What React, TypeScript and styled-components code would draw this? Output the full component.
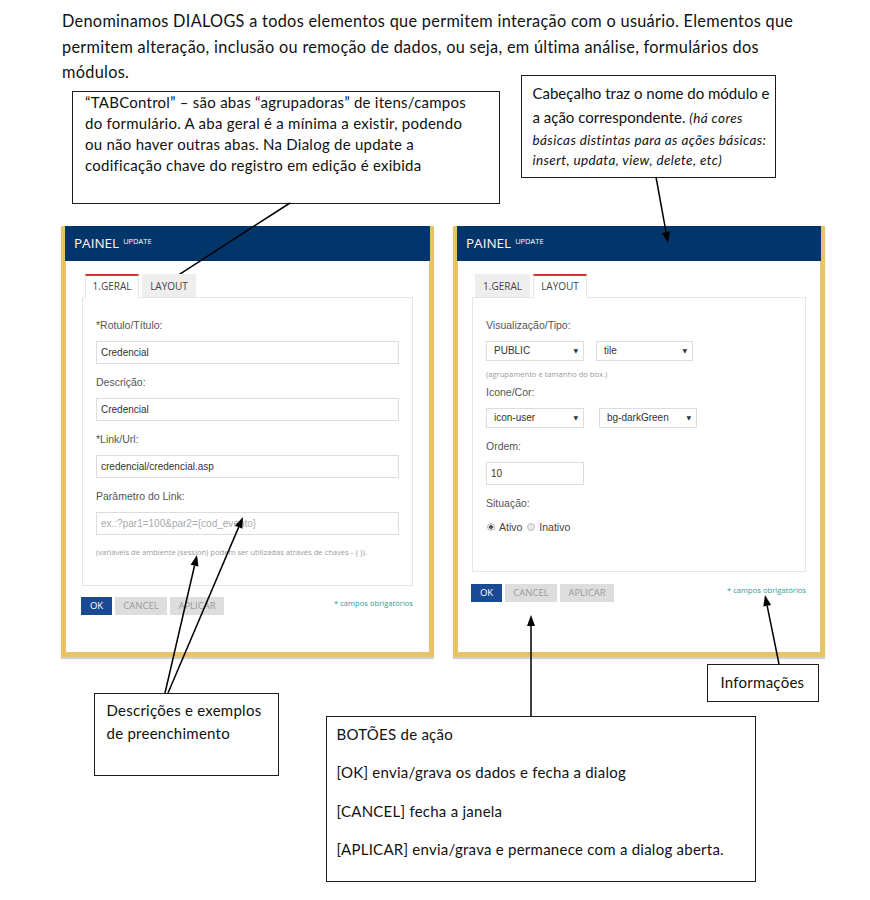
import React from "react";
import styled, {createGlobalStyle} from "styled-components";

const DOC_FONT = `"Lato", "Liberation Sans", sans-serif`;
const UI_FONT = `"Open Sans", "Liberation Sans", sans-serif`;
const FORM_FONT = `"Liberation Sans", Arial, sans-serif`;

const GlobalStyle = createGlobalStyle`
  body {
    margin: 0;
    background: #ffffff;
  }
  * {
    box-sizing: border-box;
  }
`;

const Page = styled.div`
  position: relative;
  width: 870px;
  height: 900px;
  overflow: hidden;
  background: #ffffff;
  font-family: ${DOC_FONT};
  color: #111111;
`;

const Intro = styled.p`
  margin: 0;
  padding: 8px 0 0 62px;
  font-size: 16.3px;
  letter-spacing: 0.3px;
  line-height: 25.5px;
`;

const CalloutRow = styled.div`
  display: flex;
  align-items: flex-start;
  margin-top: -10px;
`;

const Callout = styled.div<{$w: number; $h: number; $ml?: number; $mt?: number; $pad: string; $tight?: boolean}>`
  width: ${p => p.$w}px;
  height: ${p => p.$h}px;
  margin-left: ${p => p.$ml ?? 0}px;
  margin-top: ${p => p.$mt ?? 0}px;
  padding: ${p => p.$pad};
  border: 1.5px solid #1c1c1c;
  background: #ffffff;
  font-size: 15px;
  letter-spacing: ${p => (p.$tight ? "0" : "0.25px")};
  white-space: nowrap;
  flex-shrink: 0;
`;

const CalloutText = styled.div<{$lh: number}>`
  line-height: ${p => p.$lh}px;
`;

const Note = styled.i`
  font-size: 13.5px;
  letter-spacing: 0.4px;
`;

const NoteBlock = styled.div`
  font-style: italic;
  font-size: 13.5px;
  letter-spacing: 0.4px;
  line-height: 20px;
`;

const CalloutPara = styled.p`
  margin: 0 0 17.5px 0;
  line-height: 21px;
`;

const PanelRow = styled.div`
  display: flex;
  gap: 19px;
  margin-top: 22px;
  padding-left: 61px;
`;

const Panel = styled.div<{$w: number}>`
  width: ${p => p.$w}px;
  display: flex;
  flex-direction: column;
  background: #ffffff;
  border: 5px solid #e7c36b;
  border-top: none;
  box-shadow: 0 2px 1px rgba(0, 0, 0, 0.18);
`;

const PanelHeader = styled.div`
  height: 35px;
  margin: 0 -1px;
  padding-left: 9px;
  display: flex;
  align-items: center;
  background: #02366b;
  color: #ffffff;
  font-family: ${UI_FONT};
  font-size: 13.5px;
`;

const Sup = styled.span`
  font-size: 7.5px;
  margin-left: 4px;
  align-self: flex-start;
  margin-top: 10px;
`;

const PanelBody = styled.div<{$inset: number; $pb: number}>`
  flex: 1;
  display: flex;
  flex-direction: column;
  padding: 13px ${p => p.$inset}px ${p => p.$pb}px ${p => p.$inset}px;
`;

const Tabs = styled.div`
  display: flex;
  gap: 3px;
  padding-left: 3px;
  position: relative;
  z-index: 1;
  margin-bottom: -1px;
`;

const Tab = styled.div<{$active?: boolean; $w: number}>`
  width: ${p => p.$w}px;
  height: 24px;
  display: flex;
  align-items: center;
  justify-content: center;
  font-family: ${UI_FONT};
  font-size: 10px;
  color: #444444;
  background: ${p => (p.$active ? "#ffffff" : "#eeeeee")};
  border-top: 2px solid ${p => (p.$active ? "#cc3a32" : "#eeeeee")};
  border-left: 1px solid ${p => (p.$active ? "#e6e6e6" : "#eeeeee")};
  border-right: 1px solid ${p => (p.$active ? "#e6e6e6" : "#eeeeee")};
  border-bottom: 1px solid ${p => (p.$active ? "#ffffff" : "#e6e6e6")};
`;

const TabPane = styled.div<{$pb: number}>`
  border: 1px solid #e6e6e6;
  padding: 19px 13px ${p => p.$pb}px 13px;
  font-family: ${FORM_FONT};
`;

const Label = styled.div<{$mt?: number}>`
  margin-top: ${p => p.$mt ?? 0}px;
  margin-bottom: 8px;
  font-size: 10.5px;
  line-height: 16px;
  color: #555555;
`;

const Input = styled.div<{$w?: number; $placeholder?: boolean}>`
  width: ${p => (p.$w ? `${p.$w}px` : "100%")};
  height: 23px;
  display: flex;
  align-items: center;
  padding-left: 4px;
  border: 1px solid #dddddd;
  font-size: 10px;
  color: ${p => (p.$placeholder ? "#aaaaaa" : "#333333")};
`;

const SelectRow = styled.div<{$gap: number}>`
  display: flex;
  gap: ${p => p.$gap}px;
`;

const Select = styled.div<{$w: number}>`
  width: ${p => p.$w}px;
  height: 20px;
  display: flex;
  align-items: center;
  justify-content: space-between;
  padding: 0 5px 0 7px;
  border: 1px solid #dddddd;
  font-size: 10px;
  color: #333333;
`;

const Caret = styled.span`
  font-family: "DejaVu Sans", sans-serif;
  font-size: 6px;
  color: #333333;
`;

const Hint = styled.div<{$mt: number}>`
  margin-top: ${p => p.$mt}px;
  font-family: ${UI_FONT};
  font-size: 7.6px;
  line-height: 12px;
  color: #9a9a9a;
`;

const RadioRow = styled.div`
  display: flex;
  align-items: center;
  height: 16px;
  font-size: 10.5px;
  color: #444444;
`;

const Radio = styled.span<{$checked?: boolean}>`
  width: 8px;
  height: 8px;
  margin: 0 4px 0 1px;
  border-radius: 50%;
  border: 1px solid #bbbbbb;
  background: ${p => (p.$checked ? "radial-gradient(circle, #555555 0 1.6px, #e4e4e4 2px)" : "#e9e9e9")};
`;

const RadioLabel = styled.span`
  margin-right: 4px;
`;

const Footer = styled.div<{$mt: number}>`
  display: flex;
  justify-content: space-between;
  align-items: flex-start;
  margin: ${p => p.$mt}px 0 0 -1px;
`;

const Buttons = styled.div`
  display: flex;
  gap: 3px;
`;

const Button = styled.div<{$primary?: boolean; $w: number}>`
  width: ${p => p.$w}px;
  height: 18px;
  display: flex;
  align-items: center;
  justify-content: center;
  font-family: ${UI_FONT};
  font-size: 9.5px;
  color: ${p => (p.$primary ? "#ffffff" : "#9a9a9a")};
  background: ${p => (p.$primary ? "#1b4a95" : "#dddddd")};
`;

const Required = styled.div`
  font-family: ${UI_FONT};
  font-size: 7.6px;
  line-height: 12px;
  color: #2f9d92;
`;

const BottomRow = styled.div`
  display: flex;
  align-items: flex-start;
  margin-top: 7px;
`;

const RightColumn = styled.div`
  width: 493px;
  margin-left: 47px;
  display: flex;
  flex-direction: column;
`;

const InfoCallout = styled(Callout)`
  align-self: flex-end;
`;

const Overlay = styled.svg`
  position: absolute;
  left: 0;
  top: 0;
  width: 870px;
  height: 900px;
  pointer-events: none;
`;

type ArrowProps = { x1: number; y1: number; x2: number; y2: number };

const Arrow: React.FC<ArrowProps> = ({x1, y1, x2, y2}) => {
    const len = Math.hypot(x2 - x1, y2 - y1);
    const ux = (x2 - x1) / len;
    const uy = (y2 - y1) / len;
    const headLen = 11;
    const half = 4;
    const bx = x2 - ux * headLen;
    const by = y2 - uy * headLen;
    const pts = [
        `${x2},${y2}`,
        `${bx - uy * half},${by + ux * half}`,
        `${bx + uy * half},${by - ux * half}`,
    ].join(" ");
    return <g>
        <line x1={x1} y1={y1} x2={bx} y2={by} stroke="#000" strokeWidth={1.5}/>
        <polygon points={pts} fill="#000"/>
    </g>;
};

const PanelHead: React.FC = () => <PanelHeader>
    PAINEL<Sup>UPDATE</Sup>
</PanelHeader>;

const FormFooter: React.FC<{ mt: number }> = ({mt}) => <Footer $mt={mt}>
    <Buttons>
        <Button $primary $w={31}>OK</Button>
        <Button $w={52}>CANCEL</Button>
        <Button $w={54}>APLICAR</Button>
    </Buttons>
    <Required>* campos obrigatórios</Required>
</Footer>;

const GeneralPanel: React.FC = () => <Panel $w={373}>
    <PanelHead/>
    <PanelBody $inset={16} $pb={37}>
        <Tabs>
            <Tab $active $w={54}>1.GERAL</Tab>
            <Tab $w={54}>LAYOUT</Tab>
        </Tabs>
        <TabPane $pb={27}>
            <Label>*Rotulo/Título:</Label>
            <Input>Credencial</Input>
            <Label $mt={10}>Descrição:</Label>
            <Input>Credencial</Input>
            <Label $mt={10}>*Link/Url:</Label>
            <Input>credencial/credencial.asp</Input>
            <Label $mt={10}>Parâmetro do Link:</Label>
            <Input $placeholder>ex.:?par1=100&amp;par2={"{cod_evento}"}</Input>
            <Hint $mt={11}>(variáveis de ambiente (session) podem ser utilizadas através de chaves - {"{ }"}).</Hint>
        </TabPane>
        <FormFooter mt={11}/>
    </PanelBody>
</Panel>;

const LayoutPanel: React.FC = () => <Panel $w={372}>
    <PanelHead/>
    <PanelBody $inset={14} $pb={0}>
        <Tabs>
            <Tab $w={55}>1.GERAL</Tab>
            <Tab $active $w={54}>LAYOUT</Tab>
        </Tabs>
        <TabPane $pb={36}>
            <Label>Visualização/Tipo:</Label>
            <SelectRow $gap={12}>
                <Select $w={98}>PUBLIC<Caret>▼</Caret></Select>
                <Select $w={97}>tile<Caret>▼</Caret></Select>
            </SelectRow>
            <Hint $mt={7}>(agrupamento e tamanho do box.)</Hint>
            <Label $mt={4}>Icone/Cor:</Label>
            <SelectRow $gap={15}>
                <Select $w={98}>icon-user<Caret>▼</Caret></Select>
                <Select $w={98}>bg-darkGreen<Caret>▼</Caret></Select>
            </SelectRow>
            <Label $mt={10}>Ordem:</Label>
            <Input $w={98}>10</Input>
            <Label $mt={10}>Situação:</Label>
            <RadioRow>
                <Radio $checked/><RadioLabel>Ativo</RadioLabel>
                <Radio/><RadioLabel>Inativo</RadioLabel>
            </RadioRow>
        </TabPane>
        <FormFooter mt={12}/>
    </PanelBody>
</Panel>;

const App: React.FC = () => {
    return <Page>
        <GlobalStyle/>
        <Intro>
            Denominamos DIALOGS a todos elementos que permitem interação com o usuário. Elementos que<br/>
            permitem alteração, inclusão ou remoção de dados, ou seja, em última análise, formulários dos<br/>
            módulos.
        </Intro>
        <CalloutRow>
            <Callout $w={428} $h={113} $ml={72} $mt={16} $pad="0 8px 0 12px">
                <CalloutText $lh={21}>
                    “TABControl” – são abas “agrupadoras” de itens/campos<br/>
                    do formulário. A aba geral é a mínima a existir, podendo<br/>
                    ou não haver outras abas. Na Dialog de update a<br/>
                    codificação chave do registro em edição é exibida
                </CalloutText>
            </Callout>
            <Callout $w={255} $h={103} $ml={21} $pad="5.5px 4px 0 10.5px" $tight>
                <CalloutText $lh={24}>
                    Cabeçalho traz o nome do módulo e<br/>
                    a ação correspondente. <Note>(há cores</Note>
                </CalloutText>
                <NoteBlock>
                    básicas distintas para as ações básicas:<br/>
                    insert, updata, view, delete, etc)
                </NoteBlock>
            </Callout>
        </CalloutRow>
        <PanelRow>
            <GeneralPanel/>
            <LayoutPanel/>
        </PanelRow>
        <BottomRow>
            <Callout $w={185} $h={83} $ml={94} $mt={29} $pad="5px 6px 0 11.5px">
                <CalloutText $lh={23}>
                    Descrições e exemplos<br/>
                    de preenchimento
                </CalloutText>
            </Callout>
            <RightColumn>
                <InfoCallout $w={112} $h={38} $pad="7px 4px 0 12.5px">
                    <CalloutText $lh={21}>Informações</CalloutText>
                </InfoCallout>
                <Callout $w={430} $h={166} $mt={14} $pad="7px 6px 0 9.5px">
                    <CalloutPara>BOTÕES de ação</CalloutPara>
                    <CalloutPara>[OK] envia/grava os dados e fecha a dialog</CalloutPara>
                    <CalloutPara>[CANCEL] fecha a janela</CalloutPara>
                    <CalloutPara>[APLICAR] envia/grava e permanece com a dialog aberta.</CalloutPara>
                </Callout>
            </RightColumn>
        </BottomRow>
        <Overlay viewBox="0 0 870 900">
            <Arrow x1={290} y1={203} x2={166} y2={283}/>
            <Arrow x1={656} y1={177} x2={668} y2={243}/>
            <Arrow x1={165} y1={693} x2={197} y2={555}/>
            <Arrow x1={168} y1={693} x2={243} y2={517}/>
            <Arrow x1={531} y1={716} x2={531} y2={615}/>
            <Arrow x1={779} y1={664} x2={765} y2={595}/>
        </Overlay>
    </Page>;
};

export default App;
